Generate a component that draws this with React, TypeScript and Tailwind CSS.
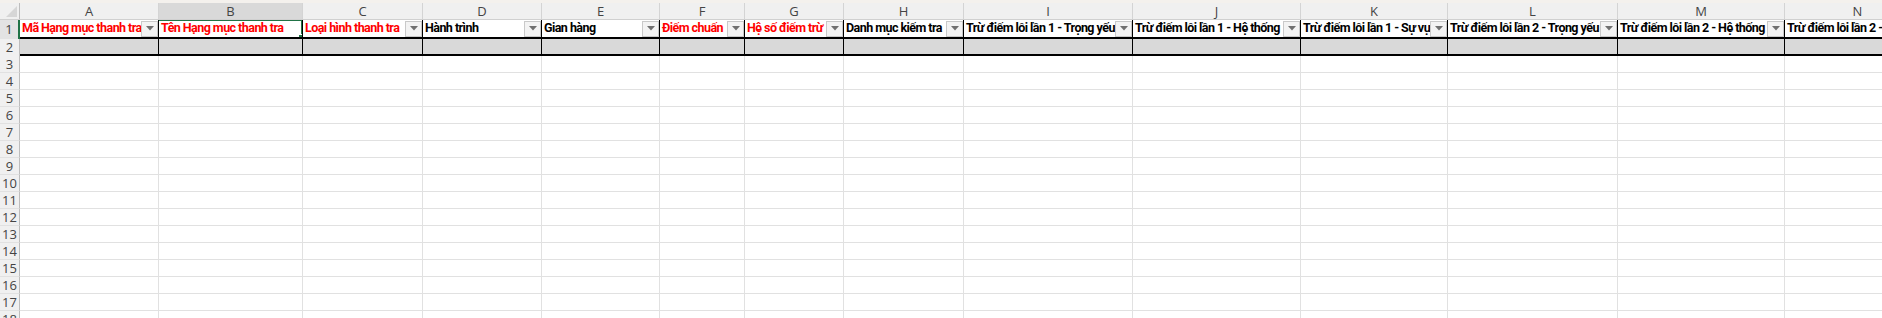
import React from "react";

type Col = { key: string; width: number; title: string; red?: boolean; filter?: boolean };

const columns: Col[] = [
  { key: "A", width: 139, title: "Mã Hạng mục thanh tra", red: true, filter: true },
  { key: "B", width: 144, title: "Tên Hạng mục thanh tra", red: true },
  { key: "C", width: 120, title: "Loại hình thanh tra", red: true, filter: true },
  { key: "D", width: 119, title: "Hành trình", filter: true },
  { key: "E", width: 118, title: "Gian hàng", filter: true },
  { key: "F", width: 85, title: "Điểm chuẩn", red: true, filter: true },
  { key: "G", width: 99, title: "Hệ số điểm trừ", red: true, filter: true },
  { key: "H", width: 120, title: "Danh mục kiểm tra", filter: true },
  { key: "I", width: 169, title: "Trừ điểm lỗi lần 1 - Trọng yếu", filter: true },
  { key: "J", width: 168, title: "Trừ điểm lỗi lần 1 - Hệ thống", filter: true },
  { key: "K", width: 147, title: "Trừ điểm lỗi lần 1 - Sự vụ", filter: true },
  { key: "L", width: 170, title: "Trừ điểm lỗi lần 2 - Trọng yếu", filter: true },
  { key: "M", width: 167, title: "Trừ điểm lỗi lần 2 - Hệ thống", filter: true },
  { key: "N", width: 146, title: "Trừ điểm lỗi lần 2 - Sự vụ", filter: true },
];

const bodyRows = Array.from({ length: 17 }, (_, i) => i + 3);

function FilterButton() {
  return (
    <div className="shrink-0 w-[17px] h-[16px] bg-[#f3f3f3] border border-[#c9c9c9] flex items-center justify-center">
      <svg width="8" height="5" viewBox="0 0 8 5">
        <path d="M0 0 L8 0 L4 4.5 Z" fill="#707070" />
      </svg>
    </div>
  );
}

export default function App() {
  return (
    <div className="w-[1882px] h-[318px] overflow-hidden bg-white font-['Open_Sans',sans-serif]">
      {/* top strip */}
      <div className="h-[3px] bg-[#f4f1ed]" />

      {/* column letters */}
      <div className="flex h-[17px] bg-[#f0f0f0] border-b border-[#d0d0d0]">
        <div className="shrink-0 w-[20px] border-r border-[#bdbdbd] relative">
          <svg className="absolute right-[2px] bottom-[2px]" width="11" height="11" viewBox="0 0 11 11">
            <path d="M11 0 L11 11 L0 11 Z" fill="#d6d6d6" />
          </svg>
        </div>
        {columns.map((c) => (
          <div
            key={c.key}
            style={{ width: c.width }}
            className={`shrink-0 border-r border-[#d4d4d4] flex items-center justify-center text-[13px] leading-none text-[#444] ${
              c.key === "B" ? "bg-[#d9d9d9]" : ""
            }`}
          >
            {c.key}
          </div>
        ))}
      </div>

      {/* row 1 - headers */}
      <div className="flex h-[19px]">
        <div className="shrink-0 w-[20px] bg-[#e3e3e3] border-r-2 border-[#217346] flex items-center justify-center text-[13px] text-[#444] leading-none">
          1
        </div>
        {columns.map((c) => (
          <div
            key={c.key}
            style={{ width: c.width }}
            className="shrink-0 relative border-r border-b-2 border-black flex items-center overflow-hidden"
          >
            <span
              className={`flex-1 min-w-0 whitespace-nowrap overflow-hidden pl-[2px] font-['Roboto',sans-serif] font-bold text-[12.5px] tracking-[-0.55px] leading-none ${
                c.red ? "text-[#ff0000]" : "text-black"
              }`}
            >
              {c.title}
            </span>
            {c.filter && <FilterButton />}
            {c.key === "B" && (
              <>
                <div className="absolute left-[-2px] right-[-1px] top-[-1px] bottom-[-2px] border-2 border-[#217346]" />
                <div className="absolute right-[-2px] bottom-[-3px] w-[6px] h-[6px] bg-[#217346] border border-white" />
              </>
            )}
          </div>
        ))}
      </div>

      {/* row 2 - gray band */}
      <div className="flex h-[17px]">
        <div className="shrink-0 w-[20px] bg-[#f0f0f0] border-r border-[#bdbdbd] flex items-center justify-center text-[13px] text-[#444] leading-none">
          2
        </div>
        {columns.map((c) => (
          <div
            key={c.key}
            style={{ width: c.width }}
            className="shrink-0 bg-[#d9d9d9] border-r border-b-2 border-black"
          />
        ))}
      </div>

      {/* empty rows */}
      {bodyRows.map((r) => (
        <div key={r} className="flex h-[17px]">
          <div className="shrink-0 w-[20px] bg-[#f0f0f0] border-r border-b border-r-[#bdbdbd] border-b-[#e1e1e1] flex items-center justify-center text-[13px] text-[#444] leading-none">
            {r}
          </div>
          {columns.map((c) => (
            <div
              key={c.key}
              style={{ width: c.width }}
              className="shrink-0 border-r border-b border-[#e1e1e1]"
            />
          ))}
        </div>
      ))}
    </div>
  );
}
